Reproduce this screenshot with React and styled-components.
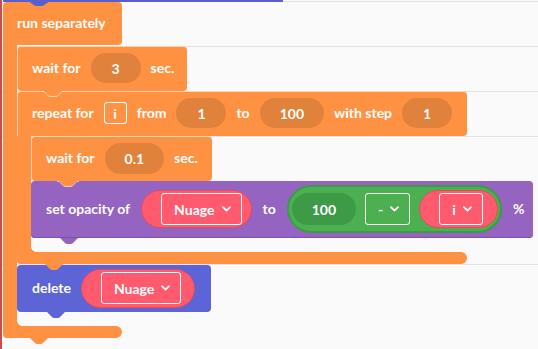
import React from 'react';
import styled, { createGlobalStyle } from 'styled-components';

const COL = {
  orange: '#ff9142',
  orangePill: '#e0823c',
  purple: '#9563c0',
  purpleEdge: '#7e4fae',
  blue: '#5c64d6',
  prev: '#5a5fd0',
  red: '#ff5a6e',
  redEdge: '#e44b61',
  green: '#4caf50',
  greenEdge: '#3f9a46',
  greenPill: '#3d9a47',
  light: 'rgba(255,255,255,0.6)',
  line: '#e3e3e3',
};

const Global = createGlobalStyle`
  html, body { margin: 0; padding: 0; background: #fafafa; }
  body { font-family: Lato, "Noto Sans", sans-serif; }
`;

const line = (y) => `linear-gradient(${COL.line}, ${COL.line}) 0 ${y}px / 100% 1px no-repeat`;

const Page = styled.div`
  width: 538px;
  height: 349px;
  overflow: hidden;
  display: flex;
  background: ${[1, 46, 91, 136, 264].map(line).join(', ')}, #fafafa;
  font-family: Lato, "Noto Sans", sans-serif;
`;

const RedStrip = styled.div`
  width: 2px;
  flex-shrink: 0;
  background: #cf4a4a;
  margin-right: 1px;
`;

const Canvas = styled.div`
  flex: 1;
  display: flex;
  flex-direction: column;
  align-items: flex-start;
`;

const PrevEdge = styled.div`
  position: relative;
  width: 280px;
  height: 2px;
  flex-shrink: 0;
  background: ${COL.prev};
`;

const TabSvg = styled.svg`
  position: absolute;
  top: ${(p) => p.$top ?? '100%'};
  left: ${(p) => p.$left}px;
  z-index: 3;
  overflow: visible;
`;

function Tab({ color, left = 28, w = 18, h = 6, stroke, top }) {
  const d = `M0 0 L${w * 0.25} ${h - 1.5} Q${w * 0.32} ${h} ${w * 0.42} ${h} L${w * 0.58} ${h} Q${w * 0.68} ${h} ${w * 0.75} ${h - 1.5} L${w} 0 Z`;
  const s = `M-2 0.5 L0 0.5 L${w * 0.25} ${h - 1} Q${w * 0.32} ${h - 0.5} ${w * 0.42} ${h - 0.5} L${w * 0.58} ${h - 0.5} Q${w * 0.68} ${h - 0.5} ${w * 0.75} ${h - 1} L${w} 0.5 L${w + 2} 0.5`;
  return (
    <TabSvg $left={left} $top={top} width={w} height={h} viewBox={`0 0 ${w} ${h}`}>
      <path d={d} fill={color} />
      {stroke && <path d={s} fill="none" stroke={stroke} strokeWidth="1" />}
    </TabSvg>
  );
}

const CBlock = styled.div`
  display: flex;
  flex-direction: column;
  align-items: flex-start;
  position: relative;
`;

const Row = styled.div`
  position: relative;
  width: ${(p) => p.$w}px;
  height: ${(p) => p.$h}px;
  box-sizing: border-box;
  flex-shrink: 0;
  display: flex;
  align-items: center;
  gap: ${(p) => p.$gap || 10}px;
  padding: 0 14px 1px ${(p) => p.$pl || 15}px;
  background: ${(p) => p.$bg};
  color: #fff;
  border-radius: ${(p) => p.$radius || '4px'};
  margin-top: ${(p) => p.$mt || 0}px;
  box-shadow: ${(p) =>
    p.$nested
      ? `inset 0 1px 0 ${COL.light}, inset 1px 0 0 ${COL.light}`
      : p.$edge
      ? `inset 0 -1px 0 ${p.$edge}`
      : 'none'};
`;

const CBody = styled.div`
  display: flex;
  align-self: stretch;
`;

const Arm = styled.div`
  width: 14px;
  flex-shrink: 0;
  background: ${COL.orange};
`;

const Stack = styled.div`
  display: flex;
  flex-direction: column;
  align-items: flex-start;
  padding-top: ${(p) => p.$pt || 0}px;
  padding-bottom: 14px;
`;

const Footer = styled.div`
  position: relative;
  width: ${(p) => p.$w}px;
  height: 12px;
  background: ${COL.orange};
  border-radius: 0 6px 6px 4px;

  &::before {
    content: '';
    position: absolute;
    left: 14px;
    top: -5px;
    width: 5px;
    height: 5px;
    background: radial-gradient(circle at 100% 0, transparent 4.5px, ${COL.orange} 5px);
  }
`;

const Label = styled.span`
  font-size: 14px;
  font-weight: 700;
  color: #fff;
  white-space: nowrap;
  line-height: 1;
`;

const Pill = styled.span`
  display: inline-flex;
  align-items: center;
  justify-content: center;
  box-sizing: border-box;
  min-width: 50px;
  height: ${(p) => p.$h || 30}px;
  padding: 0 20px;
  border-radius: 16px;
  background: ${(p) => p.$bg || COL.orangePill};
  color: #fff;
  font-size: 14px;
  font-weight: 700;
  flex-shrink: 0;
`;

const VarBox = styled.span`
  display: inline-flex;
  align-items: center;
  justify-content: center;
  box-sizing: border-box;
  width: 23px;
  height: 22px;
  border: 1px solid #fff;
  border-radius: 3px;
  font-size: 14px;
  font-weight: 700;
  color: #fff;
  flex-shrink: 0;
`;

const RedPill = styled.span`
  display: inline-flex;
  align-items: center;
  box-sizing: border-box;
  height: ${(p) => p.$h || 38}px;
  padding: 0 ${(p) => p.$pr || 12}px 0 19px;
  border-radius: 20px;
  background: ${COL.red};
  border: 1px solid ${COL.redEdge};
  flex-shrink: 0;
`;

const GreenPill = styled.span`
  display: inline-flex;
  align-items: center;
  gap: 9px;
  box-sizing: border-box;
  height: 48px;
  padding: 0 2px 0 3px;
  border-radius: 24px;
  background: ${COL.green};
  border: 2px solid ${COL.greenEdge};
  flex-shrink: 0;
`;

const Select = styled.span`
  display: inline-flex;
  align-items: center;
  gap: 7px;
  box-sizing: border-box;
  height: 32px;
  padding: 0 10px 0 12px;
  border: 1px solid #fff;
  border-radius: 3px;
  color: #fff;
  font-size: 14px;
  font-weight: 700;
  white-space: nowrap;
  flex-shrink: 0;
`;

const Chevron = () => (
  <svg width="9" height="6" viewBox="0 0 9 6">
    <path d="M1 1.2 L4.5 4.6 L8 1.2" fill="none" stroke="#fff" strokeWidth="1.8" strokeLinecap="round" strokeLinejoin="round" />
  </svg>
);

const Dropdown = ({ children }) => (
  <Select>
    {children}
    <Chevron />
  </Select>
);

export default function App() {
  return (
    <>
      <Global />
      <Page>
        <RedStrip />
        <Canvas>
          <PrevEdge>
            <Tab color={COL.prev} left={24} w={24} h={6} top="0" />
          </PrevEdge>
          <CBlock>
            <Row $w={119} $h={43} $bg={COL.orange} $pl={14} $radius="4px 4px 4px 0">
              <Label>run separately</Label>
            </Row>
            <CBody>
              <Arm />
              <Stack $pt={1}>
                <Row $w={170} $h={45} $bg={COL.orange} $nested>
                  <Label>wait for</Label>
                  <Pill>3</Pill>
                  <Label>sec.</Label>
                  <Tab color={COL.orange} stroke={COL.light} left={27} />
                </Row>
                <CBlock>
                  <Row $w={450} $h={45} $bg={COL.orange} $nested $radius="4px 4px 4px 0">
                    <Label>repeat for</Label>
                    <VarBox>i</VarBox>
                    <Label>from</Label>
                    <Pill>1</Pill>
                    <Label>to</Label>
                    <Pill>100</Pill>
                    <Label>with step</Label>
                    <Pill>1</Pill>
                  </Row>
                  <CBody>
                    <Arm />
                    <Stack>
                      <Row $w={181} $h={45} $bg={COL.orange} $nested>
                        <Label>wait for</Label>
                        <Pill $h={31}>0.1</Pill>
                        <Label>sec.</Label>
                        <Tab color={COL.orange} stroke={COL.light} left={28} />
                      </Row>
                      <Row $w={502} $h={57} $bg={COL.purple} $edge={COL.purpleEdge} $gap={11}>
                        <Label>set opacity of</Label>
                        <RedPill $pr={9}>
                          <Dropdown>Nuage</Dropdown>
                        </RedPill>
                        <Label>to</Label>
                        <GreenPill>
                          <Pill $bg={COL.greenPill} $h={32}>100</Pill>
                          <Dropdown>-</Dropdown>
                          <RedPill $pr={14}>
                            <Dropdown>i</Dropdown>
                          </RedPill>
                        </GreenPill>
                        <Label>%</Label>
                        <Tab color={COL.purple} left={29} />
                      </Row>
                    </Stack>
                  </CBody>
                  <Footer $w={450}>
                    <Tab color={COL.orange} left={28} />
                  </Footer>
                </CBlock>
                <Row $w={194} $h={47} $bg={COL.blue} $mt={1}>
                  <Label>delete</Label>
                  <RedPill $h={39} $pr={13}>
                    <Dropdown>Nuage</Dropdown>
                  </RedPill>
                  <Tab color={COL.blue} left={30} />
                </Row>
              </Stack>
            </CBody>
            <Footer $w={119}>
              <Tab color={COL.orange} left={27} />
            </Footer>
          </CBlock>
        </Canvas>
      </Page>
    </>
  );
}
